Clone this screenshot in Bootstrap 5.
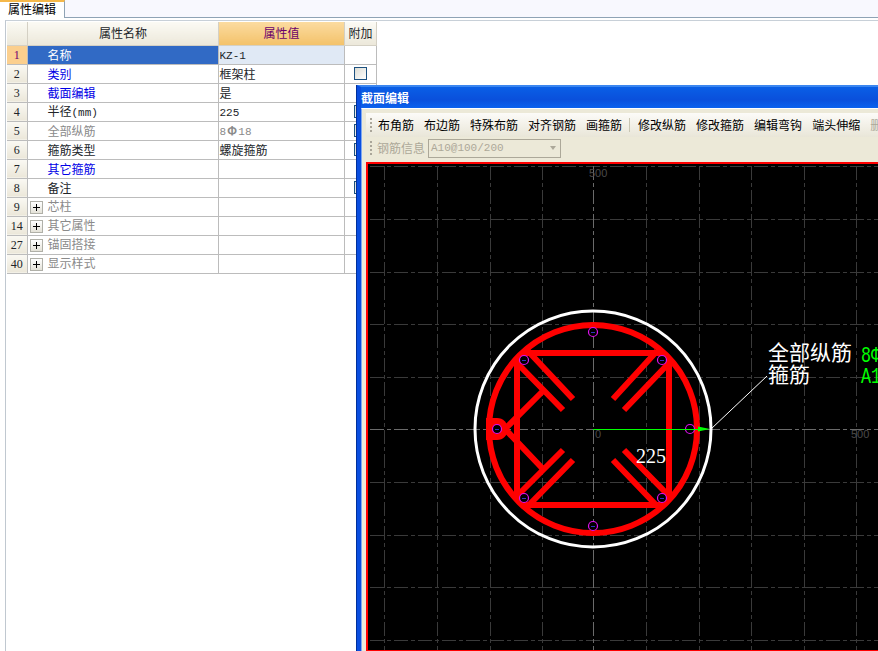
<!DOCTYPE html>
<html lang="zh-CN">
<head>
  <meta charset="UTF-8">
  <meta name="viewport" content="width=device-width, initial-scale=1">
  <title>属性编辑</title>
  <link href="https://cdn.jsdelivr.net/npm/bootstrap@5.3.0/dist/css/bootstrap.min.css" rel="stylesheet">
  <style>
    html, body { height: 100%; overflow: hidden; background: #fff; }
    body { font: 12px/1 "Noto Sans CJK SC", "Liberation Sans", sans-serif; color: #000; }

    /* tab strip */
    .tab-strip { height: 18px; background: #f8f8fe; border-bottom: 1px solid #8fa3b5; }
    .tab-item {
      width: 65px; height: 18px; padding-top: 1px; text-align: center; font-size: 12px;
      background: #fff; border-right: 1px solid #8fa3b5; border-top: 2px solid #f5b84a;
    }

    /* property grid */
    .grid-wrap { margin: 2px 0 0 5px; padding: 1px 0 0 1px; border-top: 1px solid #c8d0d8; border-left: 1px solid #c0c8d0; height: 640px; }
    .prop-grid { width: 369px; table-layout: fixed; margin: 0; border-collapse: collapse; font-size: 12px; }
    .prop-grid th, .prop-grid td { height: 19px; padding: 0 0 0 1px; border: 1px solid #bcbcbc; border-width: 0 1px 1px 0; vertical-align: middle; line-height: 1; font-weight: 400; background: #fff; white-space: nowrap; overflow: hidden; }
    .prop-grid thead th { height: 23px; text-align: center; background: linear-gradient(#fbfaf4, #ece8da); border-color: #d4d0c4; }
    .prop-grid thead th.val-head { background: linear-gradient(#fbdba0, #f3c26a); color: #6b006b; }
    .prop-grid .row-no { text-align: center; background: linear-gradient(#faf9f3, #ebe7d9); font-family: "Liberation Serif", serif; font-size: 12px; padding: 0; }
    .prop-grid .row-no.cur { background: #fbcf8e; color: #700070; }
    .prop-grid .prop-name { padding-left: 20px; }
    .prop-grid .prop-name.sel { background: #316ac5; color: #fff; }
    .prop-grid .prop-val.sel { background: #e0e9f5; }
    .prop-grid .blue { color: #0000e6; }
    .prop-grid .gray { color: #8a8a8a; }
    .num-text { font-family: "Liberation Mono", monospace; font-size: 11px; }
    .rebar-sym { font-weight: 700; margin: 0 1px; }
    .chk-box { display: block; width: 13px; height: 13px; margin-left: 8px; border: 1px solid #1c5180; background: linear-gradient(135deg, #dcdcd4, #fff); }
    .plus-box { display: inline-block; width: 13px; height: 13px; margin-right: 5px; border: 1px solid #b0b0a8; background: linear-gradient(#fff, #e4e2d8); vertical-align: -3px; position: relative; }
    .plus-box::before { content: ""; position: absolute; left: 2px; top: 5px; width: 7px; height: 1px; background: #000; }
    .plus-box::after { content: ""; position: absolute; left: 5px; top: 2px; width: 1px; height: 7px; background: #000; }
    .group-name { padding-left: 2px !important; }

    /* floating window */
    .sec-window {
      position: absolute; left: 357px; top: 85px; width: 530px; height: 580px;
      background: #ece9d8; border-left: 4px solid #0a4ee0; border-top: 2px solid #3b86f0;
      box-shadow: -1px 0 0 #00309c;
    }
    .win-title { height: 21px; background: linear-gradient(#0a5fe6, #0a50dc 60%, #0b62ee); color: #fff; font-size: 12px; font-weight: 700; }
    .win-body { padding: 4px 0 0 4px; flex: 1 1 auto; min-height: 0; border-top: 1px solid #fff; border-left: 1px solid #7fa8f0; background: #ece9d8; }
    .tool-row { height: 24px; background: linear-gradient(#fcfbf8, #e9e6d8); gap: 10px; white-space: nowrap; }
    .tool-row2 { height: 22px; gap: 3px; background: #ece9d8; width: 200px; white-space: nowrap; }
    .tool-grip { width: 2px; height: 14px; margin: 0 -4px 0 4px; flex: none; background: repeating-linear-gradient(#aaa69a 0 2px, transparent 2px 4px); }
    .tool-sep { width: 1px; height: 14px; margin: 0 -2px 0 -3px; background: #c8c5b2; flex: none; }
    .combo-ro { width: 133px; height: 19px; border: 1px solid #aca899; color: #aca899; padding-left: 2px; flex: none; }
    .combo-ro i { border: 3px solid transparent; border-top: 4px solid #aca899; border-bottom: 0; margin-right: 4px; }
    .dim { color: #aca899; }
    .dim-label { margin-left: 6px; }
    .canvas-box { border: 2px solid #f00; border-right: 0; background: #000; margin-top: 3px; height: 490px; overflow: hidden; }
    .canvas-box svg { display: block; }
    .cad-grid { shape-rendering: crispEdges; }
    .cad-cn { font-family: "Noto Sans CJK SC", sans-serif; font-size: 21px; fill: #fff; }
    .cad-green { font-family: "Liberation Mono", monospace; font-size: 22px; fill: #0f0; }
    .cad-lbl { font-family: "Liberation Sans", sans-serif; font-size: 11px; fill: #4a4a4a; }
  </style>
</head>
<body>

  <!-- 页签 -->
  <div class="tab-strip"><div class="tab-item">属性编辑</div></div>

  <!-- 属性表 -->
  <div class="grid-wrap">
    <table class="table prop-grid">
      <colgroup><col style="width:20px"><col style="width:191px"><col style="width:126px"><col style="width:32px"></colgroup>
      <thead>
        <tr><th></th><th>属性名称</th><th class="val-head">属性值</th><th>附加</th></tr>
      </thead>
      <tbody>
        <tr><td class="row-no cur">1</td><td class="prop-name sel">名称</td><td class="prop-val sel"><span class="num-text">KZ-1</span></td><td></td></tr>
        <tr><td class="row-no">2</td><td class="prop-name blue">类别</td><td>框架柱</td><td><span class="chk-box"></span></td></tr>
        <tr><td class="row-no">3</td><td class="prop-name blue">截面编辑</td><td>是</td><td></td></tr>
        <tr><td class="row-no">4</td><td class="prop-name">半径<span class="num-text">(mm)</span></td><td><span class="num-text">225</span></td><td><span class="chk-box"></span></td></tr>
        <tr><td class="row-no">5</td><td class="prop-name gray">全部纵筋</td><td class="gray"><span class="num-text">8</span><span class="rebar-sym">Φ</span><span class="num-text">18</span></td><td><span class="chk-box"></span></td></tr>
        <tr><td class="row-no">6</td><td class="prop-name">箍筋类型</td><td>螺旋箍筋</td><td><span class="chk-box"></span></td></tr>
        <tr><td class="row-no">7</td><td class="prop-name blue">其它箍筋</td><td></td><td></td></tr>
        <tr><td class="row-no">8</td><td class="prop-name">备注</td><td></td><td><span class="chk-box"></span></td></tr>
        <tr><td class="row-no">9</td><td class="group-name gray"><span class="plus-box"></span>芯柱</td><td></td><td></td></tr>
        <tr><td class="row-no">14</td><td class="group-name gray"><span class="plus-box"></span>其它属性</td><td></td><td></td></tr>
        <tr><td class="row-no">27</td><td class="group-name gray"><span class="plus-box"></span>锚固搭接</td><td></td><td></td></tr>
        <tr><td class="row-no">40</td><td class="group-name gray"><span class="plus-box"></span>显示样式</td><td></td><td></td></tr>
      </tbody>
    </table>
  </div>

  <!-- 截面编辑窗口 -->
  <div class="sec-window d-flex flex-column">
    <div class="win-title d-flex align-items-center">截面编辑</div>
    <div class="win-body d-flex flex-column">
      <div class="tool-row d-flex align-items-center">
        <span class="tool-grip"></span>
        <span>布角筋</span><span>布边筋</span><span>特殊布筋</span><span>对齐钢筋</span><span>画箍筋</span>
        <span class="tool-sep"></span>
        <span>修改纵筋</span><span>修改箍筋</span><span>编辑弯钩</span><span>端头伸缩</span><span class="dim">删除</span>
      </div>
      <div class="tool-row2 d-flex align-items-center">
        <span class="tool-grip"></span>
        <span class="dim dim-label">钢筋信息</span>
        <div class="combo-ro d-flex align-items-center justify-content-between num-text"><span>A10@100/200</span><i></i></div>
      </div>
      <div class="canvas-box">
        <!-- viewBox 用屏幕坐标，圆心 593,428；500 = 263px -->
        <svg width="510" height="488" viewBox="368 163 510 488" xmlns="http://www.w3.org/2000/svg">
          <g class="cad-grid" stroke="#3a3a3a" stroke-dasharray="14 3 4 3" fill="none">
            <path d="M384 165V651M437 165V651M490 165V651M542 165V651M646 165V651M699 165V651M751 165V651M804 165V651M856 165V651"/>
            <path d="M370 165H878M370 218H878M370 271H878M370 323H878M370 376H878M370 481H878M370 534H878M370 586H878M370 639H878"/>
          </g>
          <g class="cad-grid" stroke="#6a6a6a" stroke-dasharray="14 3 4 3" fill="none">
            <path d="M593 165V651M370 428H878"/>
          </g>
          <text class="cad-lbl" x="589" y="176">500</text>
          <text class="cad-lbl" x="595" y="437">0</text>
          <text class="cad-lbl" x="851" y="437">500</text>

          <circle cx="593" cy="428" r="118" fill="none" stroke="#fff" stroke-width="3"/>
          <g fill="none" stroke="#f00" stroke-width="6">
            <circle cx="593" cy="428" r="104"/>
            <rect x="517" y="352" width="152" height="152" rx="11"/>
            <path d="M528 350L573 398M517 362L563 409M657 350L613 398M669 362L624 409"/>
            <path d="M517 495L563 449M528 505L573 459M669 495L624 449M657 505L613 459"/>
            <path d="M505 428L542 391M505 428L542 467"/>
          </g>
          <path d="M486 417h11a11 11 0 0 1 0 22h-11z" fill="#f00"/>
          <g fill="#000" stroke="#e010f0" stroke-width="1.200">
            <circle cx="593" cy="331" r="4.500"/><circle cx="524" cy="359" r="4.500"/><circle cx="662" cy="359" r="4.500"/>
            <circle cx="497" cy="428" r="4.500"/><circle cx="690" cy="428" r="4.500"/>
            <circle cx="524" cy="497" r="4.500"/><circle cx="662" cy="497" r="4.500"/><circle cx="593" cy="525" r="4.500"/>
          </g>
          <path class="cad-grid" d="M591 331h4M522 359h4M660 359h4M495 428h4M522 497h4M660 497h4M591 525h4" stroke="#3030c0"/>
          <path class="cad-grid" d="M593 428H706" stroke="#0f0" fill="none"/>
          <path d="M698 425.500l12 2.500l-12 2.500z" fill="#0f0"/>
          <path d="M711 428L767 375" stroke="#fff" fill="none"/>
          <text x="636" y="462" font-family="Liberation Serif, serif" font-size="20" fill="#fff">225</text>
          <text class="cad-cn" x="768" y="359">全部纵筋</text>
          <text class="cad-cn" x="768" y="381">箍筋</text>
          <text class="cad-green" transform="translate(861 361) scale(.76 1)">8Φ18</text>
          <text class="cad-green" transform="translate(861 382) scale(.76 1)">A10@100/200</text>
        </svg>
      </div>
    </div>
  </div>

  <script src="https://cdn.jsdelivr.net/npm/bootstrap@5.3.0/dist/js/bootstrap.bundle.min.js"></script>
</body>
</html>
